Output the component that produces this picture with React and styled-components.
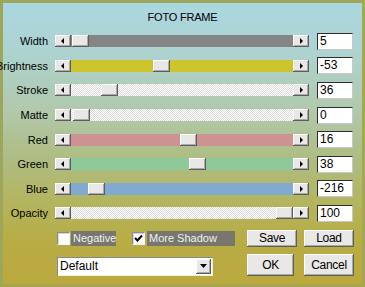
import React from "react";
import styled, { createGlobalStyle } from "styled-components";

const Global = createGlobalStyle`
  html, body { margin: 0; padding: 0; background: #9ca75b; }
  body { font-family: "Liberation Sans", Arial, sans-serif; }
`;

const Frame = styled.div`
  width: 365px;
  height: 287px;
  box-sizing: border-box;
  border: 3px solid #9ca75b;
  border-bottom-color: #a7a54e;
  border-right-color: #a3a853;
  background: linear-gradient(
    to bottom,
    #aad7e0 0%,
    #add4d4 15%,
    #b1c9ac 38%,
    #aebd84 55%,
    #b3b560 70%,
    #b8ac45 85%,
    #bba93e 100%
  );
  display: flex;
  flex-direction: column;
`;

const Title = styled.div`
  height: 26px;
  line-height: 28px;
  text-align: center;
  font-size: 11px;
  letter-spacing: -0.2px;
  color: #000;
`;

const Rows = styled.div`
  display: grid;
  grid-auto-rows: 24.6px;
`;

const Row = styled.div`
  display: flex;
  align-items: center;
`;

const Label = styled.div`
  width: 45px;
  margin-right: 7px;
  display: flex;
  justify-content: flex-end;
  white-space: nowrap;
  font-size: 11px;
  color: #000;
`;

const raised = `
  background: #e9e8e6;
  box-shadow: inset -1px -1px #5e5e5e, inset 1px 1px #ffffff, inset -2px -2px #a9a9a9;
`;

const Scroll = styled.div`
  width: 254px;
  height: 12px;
  display: flex;
`;

const ArrowBtn = styled.div`
  width: 16px;
  height: 12px;
  flex: none;
  ${raised}
  display: flex;
  align-items: center;
  justify-content: center;
`;

const tracks = {
  gray: "#858585",
  yellow: "#cdc52b",
  dither: "repeating-conic-gradient(#ffffff 0 25%, #dcdcdc 0 50%) 0 0 / 2px 2px",
  red: "#cf9292",
  green: "#8fc89a",
  blue: "#81a9d1",
};

const Track = styled.div`
  flex: 1;
  position: relative;
  background: ${(p) => tracks[p.$kind]};
`;

const Thumb = styled.div`
  position: absolute;
  top: 0;
  bottom: 0;
  width: 17px;
  ${raised}
`;

const ValueBox = styled.div`
  width: 36px;
  height: 17px;
  margin-left: 8px;
  box-sizing: border-box;
  background: #fff;
  border: 1px solid;
  border-color: #2e2e2e #c8c8c8 #c8c8c8 #2e2e2e;
  font-size: 12px;
  line-height: 15px;
  padding-left: 2px;
  color: #000;
`;

const Bottom = styled.div`
  display: grid;
  grid-template-columns: 183px 50px 50px;
  grid-template-rows: 17px 22px;
  column-gap: 7px;
  row-gap: 7px;
  padding: 4px 0 0 54px;
  align-items: center;
`;

const Checks = styled.div`
  display: flex;
  align-items: center;
  gap: 16px;
`;

const CheckItem = styled.div`
  display: flex;
  align-items: center;
`;

const Box = styled.div`
  width: 13px;
  height: 13px;
  box-sizing: border-box;
  background: #fff;
  border: 1px solid;
  border-color: #8c8c8c #f4f4f4 #f4f4f4 #8c8c8c;
  box-shadow: inset 1px 1px #d8d8d8;
  display: flex;
  align-items: center;
  justify-content: center;
`;

const CheckText = styled.div`
  width: ${(p) => p.$w}px;
  height: 15px;
  margin-left: ${(p) => p.$ml}px;
  box-sizing: border-box;
  padding-left: 2px;
  background: #77776e;
  color: #f2f2f2;
  font-size: 11px;
  line-height: 15px;
  white-space: nowrap;
`;

const Button = styled.button`
  width: ${(p) => p.$w}px;
  height: ${(p) => p.$h}px;
  border: none;
  padding: 0;
  ${raised}
  font-family: "Liberation Sans", Arial, sans-serif;
  font-size: 12px;
  letter-spacing: -0.3px;
  color: #000;
`;

const Combo = styled.div`
  align-self: end;
  width: 156px;
  height: 19px;
  box-sizing: border-box;
  background: #fff;
  box-shadow: inset 1px 1px #8a8a8a, inset -1px -1px #f6f2d8;
  display: flex;
  align-items: center;
  justify-content: space-between;
  padding: 2px 2px 2px 3px;
  font-size: 12px;
  color: #000;
`;

const ComboBtn = styled.div`
  width: 15px;
  height: 15px;
  ${raised}
  display: flex;
  align-items: center;
  justify-content: center;
`;

const Left = () => (
  <svg width="4" height="6" viewBox="0 0 4 6"><path d="M3 0v6L0 3z" fill="#000" /></svg>
);
const Right = () => (
  <svg width="4" height="6" viewBox="0 0 4 6"><path d="M1 0v6l3-3z" fill="#000" /></svg>
);
const Down = () => (
  <svg width="7" height="4" viewBox="0 0 7 4"><path d="M0 0h7L3.5 4z" fill="#000" /></svg>
);
const Tick = () => (
  <svg width="9" height="9" viewBox="0 0 9 9">
    <path d="M1 4l2.5 2.5L8 1.5" stroke="#000" strokeWidth="2" fill="none" />
  </svg>
);

const sliders = [
  { label: "Width", kind: "gray", pos: 1, value: "5" },
  { label: "Brightness", kind: "yellow", pos: 82, value: "-53" },
  { label: "Stroke", kind: "dither", pos: 30, value: "36" },
  { label: "Matte", kind: "dither", pos: 2, value: "0" },
  { label: "Red", kind: "red", pos: 109, value: "16" },
  { label: "Green", kind: "green", pos: 118, value: "38" },
  { label: "Blue", kind: "blue", pos: 17, value: "-216" },
  { label: "Opacity", kind: "dither", pos: 205, value: "100" },
];

export default function App() {
  return (
    <>
      <Global />
      <Frame>
        <Title>FOTO FRAME</Title>
        <Rows>
          {sliders.map((s) => (
            <Row key={s.label}>
              <Label>{s.label}</Label>
              <Scroll>
                <ArrowBtn><Left /></ArrowBtn>
                <Track $kind={s.kind}>
                  <Thumb style={{ left: `${s.pos}px` }} />
                </Track>
                <ArrowBtn><Right /></ArrowBtn>
              </Scroll>
              <ValueBox>{s.value}</ValueBox>
            </Row>
          ))}
        </Rows>
        <Bottom>
          <Checks>
            <CheckItem>
              <Box />
              <CheckText $w={45} $ml={1}>Negative</CheckText>
            </CheckItem>
            <CheckItem>
              <Box><Tick /></Box>
              <CheckText $w={88} $ml={2}>More Shadow</CheckText>
            </CheckItem>
          </Checks>
          <Button $w={50} $h={17}>Save</Button>
          <Button $w={50} $h={17}>Load</Button>
          <Combo>
            <span>Default</span>
            <ComboBtn><Down /></ComboBtn>
          </Combo>
          <Button $w={47} $h={22}>OK</Button>
          <Button $w={50} $h={22}>Cancel</Button>
        </Bottom>
      </Frame>
    </>
  );
}
